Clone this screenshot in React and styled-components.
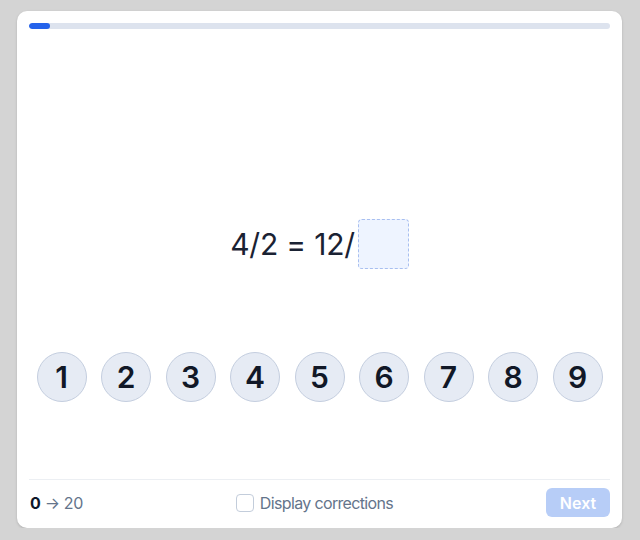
import React from "react";
import styled, { createGlobalStyle } from "styled-components";

const Global = createGlobalStyle`
  html, body { margin: 0; padding: 0; background: #d4d4d4; }
  body { font-family: Inter, "Noto Sans", sans-serif; color: #1e293b; }
  * { box-sizing: border-box; }
`;

const Page = styled.div`
  padding: 11px 18px 0 17px;
`;

const Card = styled.div`
  height: 517px;
  background: #ffffff;
  border-radius: 10px;
  box-shadow: 0 1px 3px rgba(0, 0, 0, 0.12), 0 1px 2px rgba(0, 0, 0, 0.06);
  padding: 12px 12px 11px;
  display: flex;
  flex-direction: column;
`;

const Track = styled.div`
  height: 6px;
  border-radius: 3px;
  background: #dde3ee;
  overflow: hidden;
`;

const Fill = styled.div`
  height: 100%;
  background: #2563eb;
  border-radius: 3px;
`;

const Stage = styled.div`
  flex: 1;
  display: flex;
  flex-direction: column;
  align-items: center;
`;

const Equation = styled.div`
  margin-top: 190px;
  display: flex;
  align-items: center;
  font-size: 30px;
  line-height: 50px;
  color: #1a2233;
  letter-spacing: -0.2px;
`;

const AnswerBox = styled.div`
  width: 51px;
  height: 50px;
  margin-left: 3px;
  border: 1.5px dashed #a8bff0;
  border-radius: 4px;
  background: #eef4ff;
`;

const Keypad = styled.div`
  margin-top: 83px;
  display: flex;
  gap: 14.5px;
  justify-content: center;
`;

const Key = styled.button`
  width: 50px;
  height: 50px;
  border-radius: 50%;
  border: 1.5px solid #c4cedf;
  background: #e6ebf4;
  color: #111827;
  font-family: Inter, "Noto Sans", sans-serif;
  font-size: 30px;
  font-weight: 600;
  display: flex;
  align-items: center;
  justify-content: center;
  padding: 0;
  cursor: pointer;
`;

const Footer = styled.div`
  border-top: 1px solid #eceff3;
  padding-top: 8px;
  display: grid;
  grid-template-columns: 1fr auto 1fr;
  align-items: center;
  height: 38px;
`;

const Score = styled.div`
  font-size: 16px;
  color: #64748b;
  padding-left: 1px;
  letter-spacing: -0.3px;
`;

const Strong = styled.span`
  font-weight: 700;
  color: #0f172a;
`;

const Label = styled.label`
  display: flex;
  align-items: center;
  gap: 6px;
  font-size: 16px;
  color: #64748b;
  letter-spacing: -0.65px;
  margin-left: -10px;
`;

const Box = styled.span`
  width: 18px;
  height: 18px;
  border: 1.5px solid #c3cddb;
  border-radius: 4px;
  background: #fff;
`;

const NextButton = styled.button`
  justify-self: end;
  width: 64px;
  height: 29px;
  border: none;
  border-radius: 6px;
  background: #b7cdf7;
  color: #ffffff;
  font-family: Inter, "Noto Sans", sans-serif;
  font-size: 16px;
  font-weight: 600;
  padding: 0;
`;

export default function App() {
  const progress = 3.6;
  return (
    <>
      <Global />
      <Page>
        <Card>
          <Track>
            <Fill style={{ width: `${progress}%` }} />
          </Track>
          <Stage>
            <Equation>
              4/2 = 12/
              <AnswerBox />
            </Equation>
            <Keypad>
              {[1, 2, 3, 4, 5, 6, 7, 8, 9].map((n) => (
                <Key key={n}>{n}</Key>
              ))}
            </Keypad>
          </Stage>
          <Footer>
            <Score>
              <Strong>0</Strong> → 20
            </Score>
            <Label>
              <Box />
              Display corrections
            </Label>
            <NextButton disabled>Next</NextButton>
          </Footer>
        </Card>
      </Page>
    </>
  );
}
